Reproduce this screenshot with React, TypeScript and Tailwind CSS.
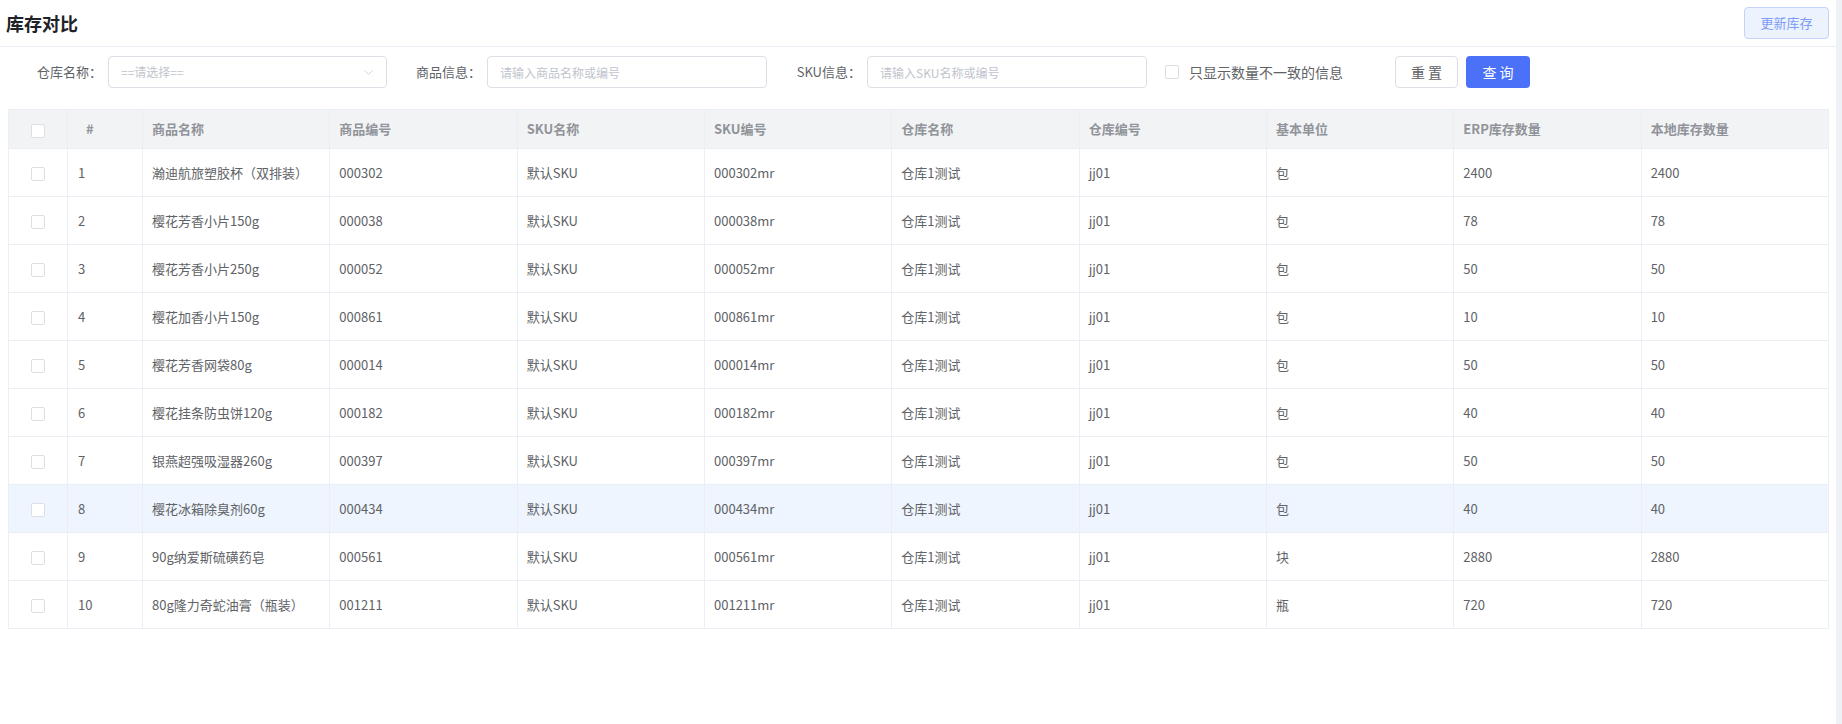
import { ChevronDown } from "lucide-react";

interface StockRow {
  id: number;
  name: string;
  code: string;
  skuName: string;
  skuCode: string;
  warehouse: string;
  warehouseCode: string;
  unit: string;
  erpQty: number;
  localQty: number;
}

const rows: StockRow[] = [
  { id: 1, name: "瀚迪航旅塑胶杯（双排装）", code: "000302", skuName: "默认SKU", skuCode: "000302mr", warehouse: "仓库1测试", warehouseCode: "jj01", unit: "包", erpQty: 2400, localQty: 2400 },
  { id: 2, name: "樱花芳香小片150g", code: "000038", skuName: "默认SKU", skuCode: "000038mr", warehouse: "仓库1测试", warehouseCode: "jj01", unit: "包", erpQty: 78, localQty: 78 },
  { id: 3, name: "樱花芳香小片250g", code: "000052", skuName: "默认SKU", skuCode: "000052mr", warehouse: "仓库1测试", warehouseCode: "jj01", unit: "包", erpQty: 50, localQty: 50 },
  { id: 4, name: "樱花加香小片150g", code: "000861", skuName: "默认SKU", skuCode: "000861mr", warehouse: "仓库1测试", warehouseCode: "jj01", unit: "包", erpQty: 10, localQty: 10 },
  { id: 5, name: "樱花芳香网袋80g", code: "000014", skuName: "默认SKU", skuCode: "000014mr", warehouse: "仓库1测试", warehouseCode: "jj01", unit: "包", erpQty: 50, localQty: 50 },
  { id: 6, name: "樱花挂条防虫饼120g", code: "000182", skuName: "默认SKU", skuCode: "000182mr", warehouse: "仓库1测试", warehouseCode: "jj01", unit: "包", erpQty: 40, localQty: 40 },
  { id: 7, name: "银燕超强吸湿器260g", code: "000397", skuName: "默认SKU", skuCode: "000397mr", warehouse: "仓库1测试", warehouseCode: "jj01", unit: "包", erpQty: 50, localQty: 50 },
  { id: 8, name: "樱花冰箱除臭剂60g", code: "000434", skuName: "默认SKU", skuCode: "000434mr", warehouse: "仓库1测试", warehouseCode: "jj01", unit: "包", erpQty: 40, localQty: 40 },
  { id: 9, name: "90g纳爱斯硫磺药皂", code: "000561", skuName: "默认SKU", skuCode: "000561mr", warehouse: "仓库1测试", warehouseCode: "jj01", unit: "块", erpQty: 2880, localQty: 2880 },
  { id: 10, name: "80g隆力奇蛇油膏（瓶装）", code: "001211", skuName: "默认SKU", skuCode: "001211mr", warehouse: "仓库1测试", warehouseCode: "jj01", unit: "瓶", erpQty: 720, localQty: 720 },
];

const headers = ["商品名称", "商品编号", "SKU名称", "SKU编号", "仓库名称", "仓库编号", "基本单位", "ERP库存数量", "本地库存数量"];

// 高亮的行（鼠标悬停状态）
const HOVER_ROW = 8;

const Checkbox = () => (
  <span className="inline-block w-[14px] h-[14px] border border-[#dcdfe6] rounded-[2px] bg-white align-middle" />
);

const App = () => {
  return (
    <div
      className="flex w-[1842px] h-[724px] bg-white text-[#606266]"
      style={{ fontFamily: '"Noto Sans CJK SC", "Noto Sans", sans-serif' }}
    >
      <div className="flex-1 flex flex-col">
        {/* 标题栏 */}
        <div className="h-[47px] flex items-center justify-between pl-[6px] pr-[7px] border-b border-[#ebeef5]">
          <h1 className="text-[18px] font-bold text-[#1f2329] leading-none">库存对比</h1>
          <button className="w-[85px] h-[32px] rounded-[4px] bg-[#ecf2fe] border border-[#c3d3fb] text-[13px] text-[#7c9cf5]">
            更新库存
          </button>
        </div>

        {/* 筛选条件 */}
        <div className="flex items-center pl-[8px] pt-[9px] pb-[21px] text-[13px]">
          <div className="flex items-center">
            <label className="w-[100px] pr-[6px] text-right">仓库名称：</label>
            <div className="w-[279px] h-[32px] border border-[#dcdfe6] rounded-[4px] flex items-center justify-between pl-[12px] pr-[10px]">
              <span className="text-[12px] text-[#c0c4cc]">==请选择==</span>
              <ChevronDown size={15} strokeWidth={1.2} className="text-[#c0c4cc]" />
            </div>
          </div>
          <div className="flex items-center">
            <label className="w-[100px] pr-[6px] text-right">商品信息：</label>
            <input
              className="w-[280px] h-[32px] border border-[#dcdfe6] rounded-[4px] px-[12px] text-[12px] outline-none placeholder:text-[#c0c4cc]"
              placeholder="请输入商品名称或编号"
            />
          </div>
          <div className="flex items-center">
            <label className="w-[100px] pr-[6px] text-right">SKU信息：</label>
            <input
              className="w-[280px] h-[32px] border border-[#dcdfe6] rounded-[4px] px-[12px] text-[12px] outline-none placeholder:text-[#c0c4cc]"
              placeholder="请输入SKU名称或编号"
            />
          </div>
          <div className="w-[230px] ml-[18px] flex items-center gap-[10px]">
            <Checkbox />
            <span className="text-[14px]">只显示数量不一致的信息</span>
          </div>
          <div className="flex items-center gap-[8px]">
            <button className="w-[63px] h-[32px] border border-[#dcdfe6] rounded-[4px] text-[14px] text-[#606266] bg-white">
              重 置
            </button>
            <button className="w-[64px] h-[32px] rounded-[4px] text-[14px] text-white bg-[#4a71f7]">
              查 询
            </button>
          </div>
        </div>

        {/* 表格 */}
        <div className="pl-[8px]">
          <table className="table-fixed border-collapse w-[1821px] text-[13px]">
            <colgroup>
              <col className="w-[59px]" />
              <col className="w-[75px]" />
              {headers.map((h) => (
                <col key={h} />
              ))}
            </colgroup>
            <thead>
              <tr className="h-[39px] bg-[#f2f3f5] text-[#909399] font-bold text-left">
                <th className="border border-[#ebeef5] text-center">
                  <Checkbox />
                </th>
                <th className="border border-[#ebeef5] pl-[18px] font-bold">#</th>
                {headers.map((h) => (
                  <th key={h} className="border border-[#ebeef5] pl-[9px] font-bold">
                    {h}
                  </th>
                ))}
              </tr>
            </thead>
            <tbody>
              {rows.map((r) => (
                <tr key={r.id} className={r.id === HOVER_ROW ? "h-[48px] bg-[#eef5fe]" : "h-[48px]"}>
                  <td className="border border-[#ebeef5] text-center">
                    <Checkbox />
                  </td>
                  <td className="border border-[#ebeef5] pl-[10px]">{r.id}</td>
                  <td className="border border-[#ebeef5] pl-[9px]">{r.name}</td>
                  <td className="border border-[#ebeef5] pl-[9px]">{r.code}</td>
                  <td className="border border-[#ebeef5] pl-[9px]">{r.skuName}</td>
                  <td className="border border-[#ebeef5] pl-[9px]">{r.skuCode}</td>
                  <td className="border border-[#ebeef5] pl-[9px]">{r.warehouse}</td>
                  <td className="border border-[#ebeef5] pl-[9px]">{r.warehouseCode}</td>
                  <td className="border border-[#ebeef5] pl-[9px]">{r.unit}</td>
                  <td className="border border-[#ebeef5] pl-[9px]">{r.erpQty}</td>
                  <td className="border border-[#ebeef5] pl-[9px]">{r.localQty}</td>
                </tr>
              ))}
            </tbody>
          </table>
        </div>
      </div>

      {/* 右侧滚动条区域 */}
      <div className="w-[6px] h-full bg-[#eef1f6]" />
    </div>
  );
};

export default App;
